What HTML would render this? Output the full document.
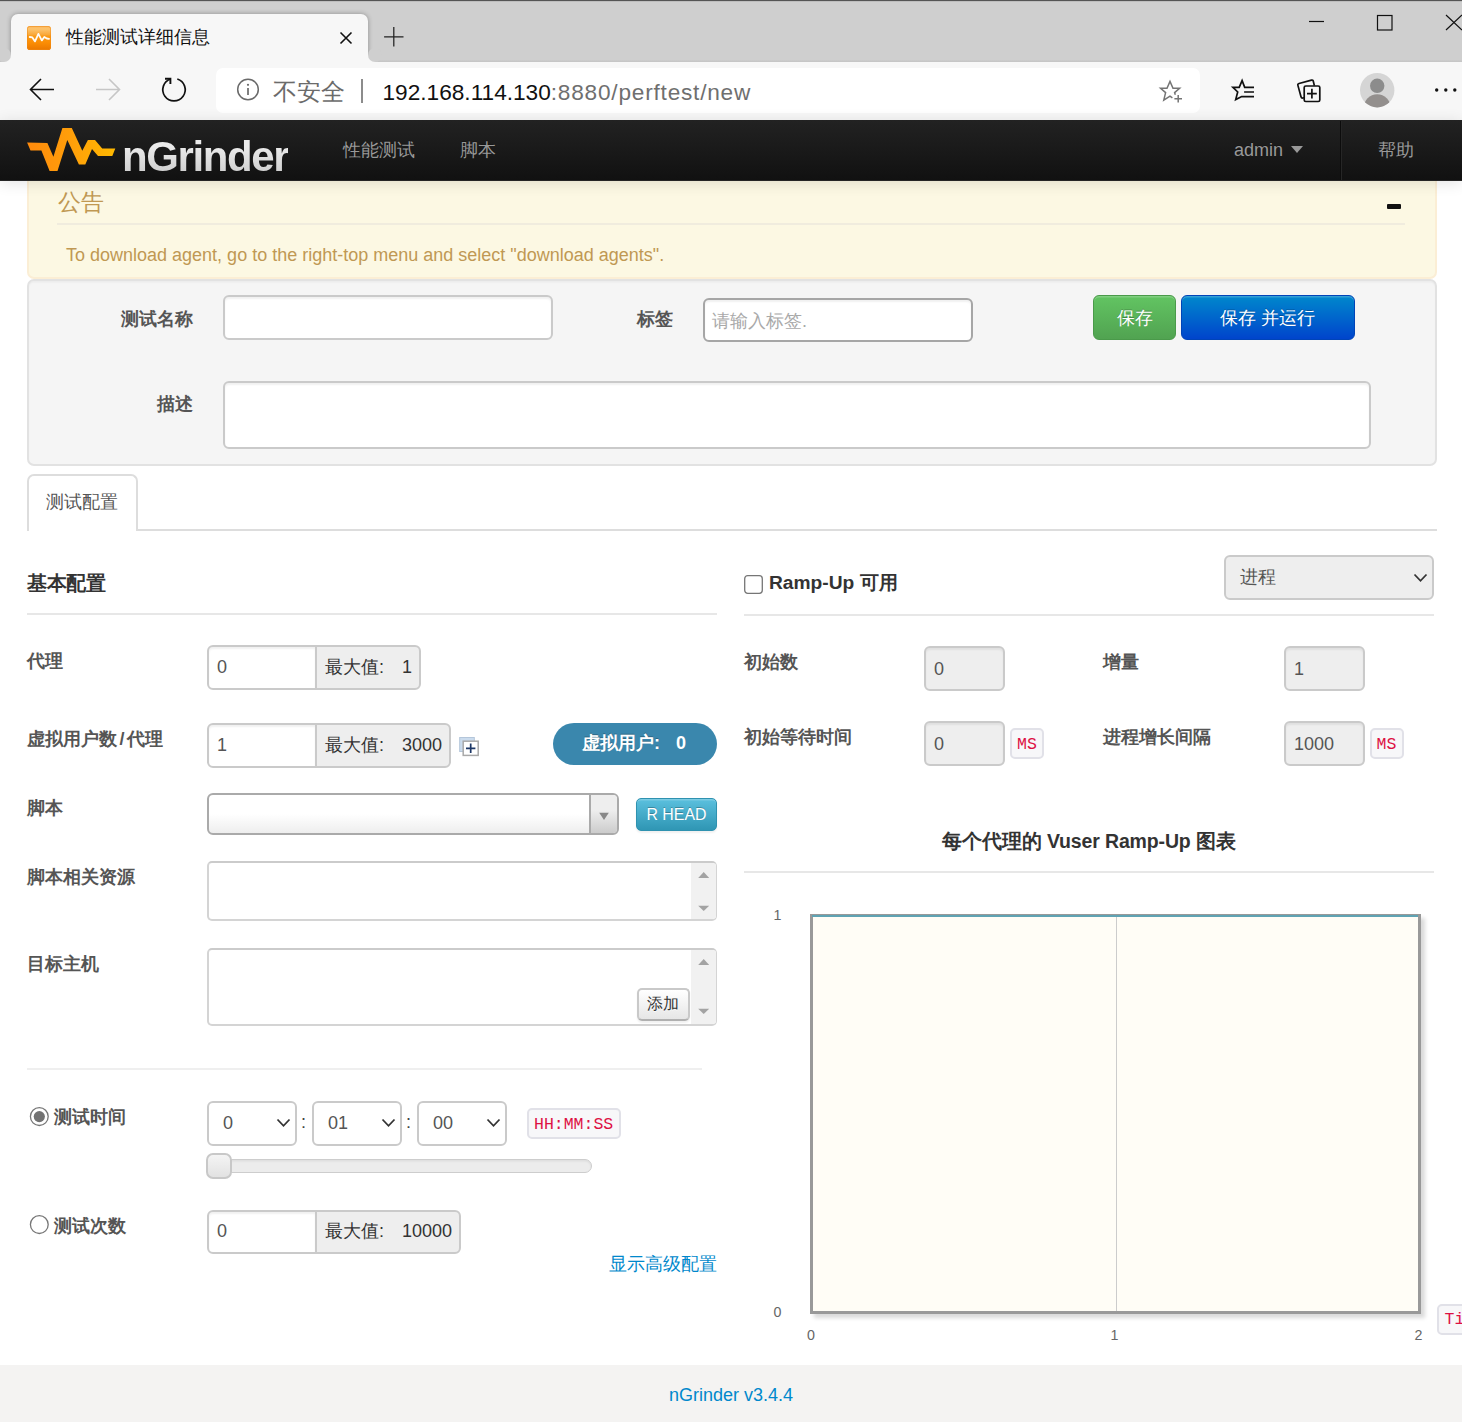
<!DOCTYPE html>
<html lang="zh">
<head>
<meta charset="utf-8">
<title>性能测试详细信息</title>
<style>
*{box-sizing:border-box;margin:0;padding:0}
html,body{width:1466px;height:1422px;overflow:hidden;background:#fff}
body{font-family:"Liberation Sans",sans-serif;font-size:18px;color:#333;position:relative}
.a{position:absolute;white-space:nowrap}
.t{position:absolute;white-space:nowrap;line-height:1}
#win{position:absolute;left:0;top:0;width:1462px;height:1422px;overflow:hidden;background:#fff}
/* browser chrome */
#topline{left:0;top:0;width:1462px;height:2px;background:linear-gradient(#505050 0,#5a5a5a 1px,#b4b4b4 1.2px,#cfcfcf 2px)}
#titlebar{left:0;top:1px;width:1462px;height:61px;background:linear-gradient(#cfcfcf 59px,#c6c6c6 60px)}
#tab{left:11px;top:14px;width:357px;height:48px;background:#f7f7f7;border-radius:7px 7px 0 0;box-shadow:0 0 5px rgba(0,0,0,.32)}
.tabfoot{width:7px;height:7px;top:54.5px;background:#f7f7f7}
.tabfoot i{position:absolute;width:14px;height:14px;border-radius:7px;background:#cfcfcf;top:-7px}
#toolbar{left:0;top:61.5px;width:1462px;height:58.5px;background:#f7f7f7}
#addr{left:216px;top:68px;width:984px;height:45px;background:#fff;border-radius:7px}
/* nav */
#nav{left:0;top:120px;width:1462px;height:61px;background:linear-gradient(#222,#111);border-bottom:1px solid #252525;box-shadow:0 1.5px 15px rgba(0,0,0,.12)}
.navt{color:#999;font-size:18px;top:141px;text-shadow:0 -1px 0 rgba(0,0,0,.25)}
/* page */
.lbl{font-weight:bold;font-size:18px;color:#555}
.hr{height:2px;background:#e7e7e7}
.inp{background:#fff;border:2px solid #cacaca;border-radius:6px;box-shadow:inset 0 2px 2px rgba(0,0,0,.06)}
.c{display:flex;align-items:center;justify-content:center;line-height:1}
.r{text-align:right}
.dis{background:#eee}
.addon{background:#eee;border:2px solid #cacaca;border-radius:0 6px 6px 0;font-size:18px;color:#333;text-shadow:0 1px 0 #fff}
.tick{font-size:14.25px;color:#666;width:20px;text-align:center}
.code{background:#f7f7f9;border:2px solid #e1e1e8;border-radius:5px;color:#d14;font-family:"Liberation Mono",monospace;font-size:16.5px}
</style>
</head>
<body>
<div id="win">

<!-- ===== browser chrome ===== -->
<div class="a" id="titlebar"></div>
<div class="a" id="topline"></div>
<div class="a" id="tab"></div>
<div class="a tabfoot" style="left:4px"><i style="left:-7px"></i></div>
<div class="a tabfoot" style="left:368px"><i style="left:0"></i></div>
<div class="a" id="toolbar"></div>
<div class="a" id="addr"></div>

<!-- favicon -->
<svg class="a" style="left:27px;top:26px" width="24" height="24" viewBox="0 0 24 24">
<defs><linearGradient id="fg" x1="0" y1="0" x2="0" y2="1"><stop offset="0" stop-color="#fbb55a"/><stop offset=".12" stop-color="#fdc46e"/><stop offset=".36" stop-color="#f9a83a"/><stop offset=".42" stop-color="#fb9a14"/><stop offset=".7" stop-color="#fb8d04"/><stop offset="1" stop-color="#ea7800"/></linearGradient></defs>
<rect x="0" y="0" width="24" height="24" rx="2.8" fill="url(#fg)"/>
<rect x=".4" y=".4" width="23.2" height="23.2" rx="2.5" fill="none" stroke="#ee8a18" stroke-width=".8" opacity=".7"/>
<path d="M2.7 11 L5.4 11.4 L8 15.4 L11.4 7.9 L14.8 14.4 L17.3 10.9 L19.8 12.5 L22 12.8" fill="none" stroke="#fff" stroke-width="1.8" stroke-linejoin="round" stroke-linecap="round" opacity=".96"/>
</svg>
<div class="t" style="left:66px;top:28px;font-size:18px;color:#111">性能测试详细信息</div>
<!-- tab close / new tab -->
<svg class="a" style="left:338px;top:30px" width="16" height="16" viewBox="0 0 16 16"><path d="M2.5 2.5 L13.5 13.5 M13.5 2.5 L2.5 13.5" stroke="#111" stroke-width="1.6" fill="none"/></svg>
<svg class="a" style="left:382px;top:25px" width="24" height="24" viewBox="0 0 24 24"><path d="M11.8 2.1 V21.5 M2.1 11.8 H21.5" stroke="#222" stroke-width="1.25" fill="none"/></svg>
<!-- window controls -->
<svg class="a" style="left:1300px;top:8px" width="162" height="30" viewBox="0 0 162 30">
<path d="M9 13.5 H24" stroke="#111" stroke-width="1.2" fill="none"/>
<rect x="77.5" y="7.5" width="14.5" height="14.5" stroke="#111" stroke-width="1.2" fill="none"/>
<path d="M146 7 L162 22 M162 7 L146 22" stroke="#111" stroke-width="1.2" fill="none"/>
</svg>

<!-- toolbar icons -->
<svg class="a" style="left:28px;top:76px" width="28" height="28" viewBox="0 0 28 28"><path d="M26 13.5 H3 M13 3 L2.5 13.5 L13 24" stroke="#111" stroke-width="1.6" fill="none"/></svg>
<svg class="a" style="left:94px;top:76px" width="28" height="28" viewBox="0 0 28 28"><path d="M2 13.5 H25 M15 3 L25.5 13.5 L15 24" stroke="#c6c6c6" stroke-width="1.6" fill="none"/></svg>
<svg class="a" style="left:160px;top:76.4px" width="28" height="28" viewBox="0 0 28 28"><path d="M17.3 3 A11.2 11.2 0 1 1 10.7 3" stroke="#111" stroke-width="1.7" fill="none"/><path d="M5 2.7 H10.4 V8.1" stroke="#111" stroke-width="1.9" fill="none"/></svg>
<!-- address bar content -->
<svg class="a" style="left:235px;top:77px" width="26" height="26" viewBox="0 0 26 26"><circle cx="13" cy="12.5" r="10.3" stroke="#6a6a6a" stroke-width="1.5" fill="none"/><path d="M13 11 V18" stroke="#6a6a6a" stroke-width="1.7"/><circle cx="13" cy="7.8" r="1.1" fill="#6a6a6a"/></svg>
<div class="t" style="left:273px;top:81px;font-size:23.5px;color:#6b6b6b">不安全</div>
<div class="a" style="left:361px;top:79px;width:1.5px;height:24px;background:#8c8c8c"></div>
<div class="t" id="url" style="left:382.5px;top:80.5px;font-size:22.65px;color:#111">192.168.114.130<span style="color:#6f6f6f;letter-spacing:.78px">:8880/perftest/new</span></div>
<!-- star+ -->
<svg class="a" style="left:1156px;top:76px" width="30" height="30" viewBox="0 0 30 30"><path d="M19.3 18.8 L18.6 16.6 L23.6 12.3 L17 12.3 L14 5.4 L11 12.3 L4.6 12.3 L9.6 16.6 L7.8 24.2 L14 20.2 L16.4 21.8" stroke="#747474" stroke-width="1.5" fill="none" stroke-linejoin="miter" stroke-miterlimit="10"/><path d="M22.2 19 V26.6 M18.4 22.8 H26" stroke="#747474" stroke-width="1.5"/></svg>
<!-- favorites -->
<svg class="a" style="left:1228px;top:75px" width="30" height="30" viewBox="0 0 30 30"><path d="M26 12.4 H16.7 L14.1 5.6 L11.2 12.4 H4.9 L9.7 17 L7.7 24.6 L13.7 21.6 H26 M16.1 17 H26" stroke="#111" stroke-width="1.7" fill="none" stroke-linejoin="miter" stroke-miterlimit="10"/></svg>
<!-- collections -->
<svg class="a" style="left:1296px;top:77px" width="28" height="28" viewBox="0 0 28 28"><path d="M18.4 8.8 L17.3 4.2 Q16.9 2.7 15.5 3.1 L3 6.5 Q1.5 6.9 1.9 8.4 L5 19.8 Q5.4 21.2 6.8 21 L8 20.7" stroke="#111" stroke-width="1.7" fill="none"/><rect x="8.2" y="9" width="15.6" height="15.5" rx="1.6" stroke="#111" stroke-width="1.7" fill="#f7f7f7"/><path d="M15.9 11.8 V21.6 M11 16.7 H20.8" stroke="#111" stroke-width="1.7"/></svg>
<!-- avatar -->
<svg class="a" style="left:1359.9px;top:72.8px" width="35" height="35" viewBox="0 0 35 35"><defs><clipPath id="av"><circle cx="17.2" cy="17.2" r="17.2"/></clipPath></defs><circle cx="17.2" cy="17.2" r="17.2" fill="#d5d5d5"/><g clip-path="url(#av)"><circle cx="17.2" cy="12.8" r="7.2" fill="#8c8c8c"/><ellipse cx="17.2" cy="34.7" rx="13.5" ry="13.4" fill="#938f8d"/></g></svg>
<!-- ellipsis -->
<svg class="a" style="left:1430px;top:84px" width="32" height="12" viewBox="0 0 32 12"><circle cx="6.7" cy="6" r="1.7" fill="#111"/><circle cx="15.8" cy="6" r="1.7" fill="#111"/><circle cx="24.8" cy="6" r="1.7" fill="#111"/></svg>

<!-- ===== page ===== -->
<div class="a" id="page" style="left:0;top:120px;width:1462px;height:1302px;background:#fff"></div>
<!--PAGE-START-->
<!-- alert -->
<div class="a" style="left:27px;top:170px;width:1410px;height:109px;background:#fcf8e3;border:2px solid #fbeed5;border-radius:0 0 7px 7px"></div>
<div class="t" style="left:58px;top:192px;font-size:22.5px;letter-spacing:-.5px;color:#c09853">公告</div>
<div class="a" style="left:57px;top:223px;width:1348px;height:2px;background:#f0ecde"></div>
<div class="a" style="left:1387px;top:204px;width:14px;height:5px;background:#111;border-radius:1px"></div>
<div class="t" style="left:66px;top:246px;font-size:18px;color:#c09853">To download agent, go to the right-top menu and select "download agents".</div>

<!-- well -->
<div class="a" style="left:27px;top:279px;width:1410px;height:186.5px;background:#f5f5f5;border:2px solid #e2e2e2;border-radius:7px;box-shadow:inset 0 1.5px 1.5px rgba(0,0,0,.04)"></div>
<div class="t lbl r" style="left:43px;width:150px;top:310px">测试名称</div>
<div class="a inp" style="left:223px;top:295px;width:330px;height:45px"></div>
<div class="t lbl r" style="left:573px;width:100px;top:310px">标签</div>
<div class="a" style="left:703px;top:298px;width:270px;height:44px;background:#fff;border:2px solid #a6a6a6;border-radius:6px;box-shadow:inset 0 2px 2px rgba(0,0,0,.06)"></div>
<div class="t" style="left:712px;top:312px;font-size:18px;color:#a9a9a9">请输入标签.</div>
<div class="a c" style="left:1093px;top:295px;width:83px;height:45px;border-radius:6px;border:1.5px solid #4a9a4a;background:linear-gradient(#62c462,#51a351);box-shadow:inset 0 1.5px 0 rgba(255,255,255,.2);font-size:18px;color:#fff;text-shadow:0 -1px 0 rgba(0,0,0,.25)">保存</div>
<div class="a c" style="left:1181px;top:295px;width:174px;height:45px;border-radius:6px;border:1.5px solid #0044b8;background:linear-gradient(#0088cc,#0044cc);box-shadow:inset 0 1.5px 0 rgba(255,255,255,.2);font-size:18px;color:#fff;text-shadow:0 -1px 0 rgba(0,0,0,.25)">保存 并运行</div>
<div class="t lbl r" style="left:43px;width:150px;top:395px">描述</div>
<div class="a inp" style="left:223px;top:381px;width:1148px;height:68px"></div>

<!-- tab -->
<div class="a" style="left:27px;top:528.5px;width:1410px;height:2px;background:#ddd"></div>
<div class="a" style="left:27px;top:474px;width:111px;height:57px;background:#fff;border:2px solid #ddd;border-bottom:none;border-radius:7px 7px 0 0"></div>
<div class="t" style="left:46px;top:493px;font-size:18px;color:#555">测试配置</div>

<!-- left column -->
<div class="t" style="left:27px;top:574px;font-size:19.5px;letter-spacing:-.5px;font-weight:bold;color:#333">基本配置</div>
<div class="a hr" style="left:27px;top:613px;width:690px;height:2px"></div>

<div class="t lbl" style="left:27px;top:652px">代理</div>
<div class="a inp" style="left:207px;top:645px;width:110px;height:44.5px;border-radius:6px 0 0 6px"></div>
<div class="t" style="left:217px;top:658px;font-size:18px;color:#555">0</div>
<div class="a addon" style="left:315px;top:645px;width:105.5px;height:44.5px"></div>
<div class="t" style="left:325px;top:658px;font-size:18px;color:#333">最大值:</div>
<div class="t" style="left:402px;top:658px;font-size:18px;color:#333">1</div>

<div class="t lbl" style="left:27px;top:730px">虚拟用户数<span style="margin:0 2.5px">/</span>代理</div>
<div class="a inp" style="left:207px;top:723px;width:110px;height:44.5px;border-radius:6px 0 0 6px"></div>
<div class="t" style="left:217px;top:736px;font-size:18px;color:#555">1</div>
<div class="a addon" style="left:315px;top:723px;width:135.5px;height:44.5px"></div>
<div class="t" style="left:325px;top:736px;font-size:18px;color:#333">最大值:</div>
<div class="t" style="left:402px;top:736px;font-size:18px;color:#333">3000</div>
<!-- expand icon -->
<svg class="a" style="left:458px;top:736px" width="22" height="22" viewBox="0 0 22 22"><rect x="1.7" y="1.5" width="14.6" height="14" fill="#cbdcee" stroke="#b4c6da" stroke-width="1"/><rect x="5.2" y="5.2" width="15" height="14.2" fill="#fff" stroke="#a9a9a9" stroke-width="1.5"/><path d="M12.7 7.6 V17 M8 12.3 H17.4" stroke="#1c3766" stroke-width="1.7"/></svg>
<!-- vuser badge -->
<div class="a" style="left:553px;top:722.5px;width:164px;height:42.5px;border-radius:22px;background:#3a87ad"></div>
<div class="t" style="left:582px;top:734px;font-size:18px;font-weight:bold;color:#fff;text-shadow:0 -1px 0 rgba(0,0,0,.25)">虚拟用户:</div>
<div class="t" style="left:676px;top:734px;font-size:18px;font-weight:bold;color:#fff">0</div>

<div class="t lbl" style="left:27px;top:799px">脚本</div>
<div class="a" style="left:207px;top:793px;width:412px;height:42px;border:2px solid #aaa;border-radius:6px;background:linear-gradient(#fff 50%,#eee);overflow:hidden"><div style="position:absolute;right:0;top:0;width:28px;height:100%;border-left:2px solid #aaa;background:linear-gradient(#eee 40%,#ccc)"></div></div>
<svg class="a" style="left:598px;top:811.5px" width="12" height="9" viewBox="0 0 12 9"><path d="M1.2 0.8 H10.8 L6 8 Z" fill="#888"/></svg>
<div class="a c" style="left:636px;top:798px;width:81px;height:33px;border-radius:5px;border:1.5px solid #2f92b0;background:linear-gradient(#5bc0de,#2f96b4);box-shadow:inset 0 1.5px 0 rgba(255,255,255,.2),0 1.5px 2px rgba(0,0,0,.06);font-size:15.9px;color:#fff;text-shadow:0 -1px 0 rgba(0,0,0,.25)">R HEAD</div>

<div class="t lbl" style="left:27px;top:868px">脚本相关资源</div>
<div class="a" style="left:207px;top:861px;width:510px;height:60px;border:2px solid #d4d4d4;border-top-color:#cbcbcb;border-right-width:1px;border-radius:5px;background:#fff;overflow:hidden"><div style="position:absolute;right:0;top:0;width:25px;height:100%;background:#f1f1f1"></div></div>
<svg class="a" style="left:697px;top:871px" width="14" height="8" viewBox="0 0 14 8"><path d="M6.7 1 L12.2 7 H1.2 Z" fill="#a3a3a3"/></svg>
<svg class="a" style="left:697px;top:905px" width="14" height="8" viewBox="0 0 14 8"><path d="M1.2 0.8 H12.2 L6.7 6 Z" fill="#a3a3a3"/></svg>

<div class="t lbl" style="left:27px;top:955px">目标主机</div>
<div class="a" style="left:207px;top:948px;width:510px;height:78px;border:2px solid #d4d4d4;border-top-color:#cbcbcb;border-right-width:1px;border-radius:5px;background:#fff;overflow:hidden"><div style="position:absolute;right:0;top:0;width:25px;height:100%;background:#f1f1f1"></div></div>
<svg class="a" style="left:697px;top:958px" width="14" height="8" viewBox="0 0 14 8"><path d="M6.7 1 L12.2 7 H1.2 Z" fill="#a3a3a3"/></svg>
<svg class="a" style="left:697px;top:1008px" width="14" height="8" viewBox="0 0 14 8"><path d="M1.2 0.8 H12.2 L6.7 6 Z" fill="#a3a3a3"/></svg>
<div class="a c" style="left:637px;top:988px;width:52.5px;height:32.5px;border-radius:5px;border:2px solid #c9c9c9;border-bottom-color:#b0b0b0;background:linear-gradient(#fff,#e6e6e6);box-shadow:0 1.5px 2px rgba(0,0,0,.06);font-size:15.75px;color:#333;text-shadow:0 1px 0 rgba(255,255,255,.75)">添加</div>

<div class="a hr" style="left:27px;top:1067.5px;width:675px;height:2px;background:#efefef"></div>

<!-- radio 1 -->
<svg class="a" style="left:29px;top:1106px" width="21" height="21" viewBox="0 0 21 21"><circle cx="10.3" cy="10.6" r="8.9" fill="#fff" stroke="#767676" stroke-width="1.3"/><circle cx="10.3" cy="10.6" r="5.6" fill="#727272"/></svg>
<div class="t lbl" style="left:54px;top:1108px">测试时间</div>
<!-- time selects -->
<div class="a inp" style="left:207px;top:1101px;width:90px;height:45px;box-shadow:none"></div>
<div class="t" style="left:223px;top:1114px;font-size:18px;color:#555">0</div>
<svg class="a" style="left:276px;top:1118px" width="15" height="10" viewBox="0 0 15 10"><path d="M1.5 1.5 L7.5 7.8 L13.5 1.5" fill="none" stroke="#333" stroke-width="1.8"/></svg>
<div class="t" style="left:301px;top:1113px;font-size:18px;color:#444">:</div>
<div class="a inp" style="left:312px;top:1101px;width:90px;height:45px;box-shadow:none"></div>
<div class="t" style="left:328px;top:1114px;font-size:18px;color:#555">01</div>
<svg class="a" style="left:381px;top:1118px" width="15" height="10" viewBox="0 0 15 10"><path d="M1.5 1.5 L7.5 7.8 L13.5 1.5" fill="none" stroke="#333" stroke-width="1.8"/></svg>
<div class="t" style="left:406px;top:1113px;font-size:18px;color:#444">:</div>
<div class="a inp" style="left:417px;top:1101px;width:90px;height:45px;box-shadow:none"></div>
<div class="t" style="left:433px;top:1114px;font-size:18px;color:#555">00</div>
<svg class="a" style="left:486px;top:1118px" width="15" height="10" viewBox="0 0 15 10"><path d="M1.5 1.5 L7.5 7.8 L13.5 1.5" fill="none" stroke="#333" stroke-width="1.8"/></svg>
<div class="a code" style="left:527px;top:1108px;width:94px;height:31px"></div>
<div class="t" style="left:534px;top:1117px;font-size:16.5px;color:#d14;font-family:'Liberation Mono',monospace">HH:MM:SS</div>
<!-- slider -->
<div class="a" style="left:207px;top:1158.5px;width:385px;height:14.5px;border-radius:8px;background:#ececec;border:1.5px solid #cdcdcd;box-shadow:inset 0 1.5px 2px rgba(0,0,0,.06)"></div>
<div class="a" style="left:205.5px;top:1152.5px;width:26px;height:26px;border-radius:7px;background:linear-gradient(#f4f4f4,#e2e2e2);border:2px solid #c8c8c8"></div>

<!-- radio 2 -->
<svg class="a" style="left:29px;top:1214px" width="21" height="21" viewBox="0 0 21 21"><circle cx="10.3" cy="10.6" r="8.9" fill="#fff" stroke="#767676" stroke-width="1.3"/></svg>
<div class="t lbl" style="left:54px;top:1216.5px">测试次数</div>
<div class="a inp" style="left:207px;top:1209.5px;width:110px;height:44.5px;border-radius:6px 0 0 6px"></div>
<div class="t" style="left:217px;top:1222px;font-size:18px;color:#555">0</div>
<div class="a addon" style="left:315px;top:1209.5px;width:145.5px;height:44.5px"></div>
<div class="t" style="left:325px;top:1222px;font-size:18px;color:#333">最大值:</div>
<div class="t" style="left:402px;top:1222px;font-size:18px;color:#333">10000</div>
<div class="t r" style="left:467px;width:250px;top:1254.7px;font-size:18px;color:#0088cc">显示高级配置</div>

<!-- right column -->
<svg class="a" style="left:743px;top:574px" width="22" height="22" viewBox="0 0 22 22"><rect x="1.7" y="1.7" width="17.6" height="17.6" rx="3" fill="#fff" stroke="#767676" stroke-width="1.3"/></svg>
<div class="t" style="left:769px;top:573px;font-size:19.2px;font-weight:bold;color:#333">Ramp-Up 可用</div>
<div class="a inp dis" style="left:1224px;top:555px;width:210px;height:44.5px;box-shadow:none"></div>
<div class="t" style="left:1240px;top:568px;font-size:18px;color:#555">进程</div>
<svg class="a" style="left:1413px;top:573px" width="15" height="10" viewBox="0 0 15 10"><path d="M1.5 1.5 L7.5 7.8 L13.5 1.5" fill="none" stroke="#333" stroke-width="1.8"/></svg>
<div class="a hr" style="left:744px;top:614px;width:690px;height:2px"></div>

<div class="t lbl" style="left:744px;top:653px">初始数</div>
<div class="a inp dis" style="left:924px;top:646px;width:81px;height:44.5px"></div>
<div class="t" style="left:934px;top:660px;font-size:18px;color:#555">0</div>
<div class="t lbl" style="left:1103px;top:653px">增量</div>
<div class="a inp dis" style="left:1284px;top:646px;width:81px;height:44.5px"></div>
<div class="t" style="left:1294px;top:660px;font-size:18px;color:#555">1</div>

<div class="t lbl" style="left:744px;top:728px">初始等待时间</div>
<div class="a inp dis" style="left:924px;top:721px;width:81px;height:45px"></div>
<div class="t" style="left:934px;top:735px;font-size:18px;color:#555">0</div>
<div class="a code" style="left:1010px;top:728px;width:33.5px;height:31px"></div>
<div class="t" style="left:1017px;top:736.5px;font-size:16.5px;color:#d14;font-family:'Liberation Mono',monospace">MS</div>
<div class="t lbl" style="left:1103px;top:728px">进程增长间隔</div>
<div class="a inp dis" style="left:1284px;top:721px;width:81px;height:45px"></div>
<div class="t" style="left:1294px;top:735px;font-size:18px;color:#555">1000</div>
<div class="a code" style="left:1370px;top:728px;width:33.5px;height:31px"></div>
<div class="t" style="left:1376.5px;top:736.5px;font-size:16.5px;color:#d14;font-family:'Liberation Mono',monospace">MS</div>

<div class="t" style="left:741px;width:696px;text-align:center;top:832px;font-size:19.5px;letter-spacing:-.15px;font-weight:bold;color:#333">每个代理的 Vuser Ramp-Up 图表</div>
<div class="a hr" style="left:744px;top:870.5px;width:690px;height:2px"></div>

<!-- chart -->
<div class="a" style="left:810px;top:913.5px;width:610.5px;height:400px;background:#fffdf6;border:3px solid #999;box-shadow:3.5px 3.5px 4px rgba(0,0,0,.15)"></div>
<div class="a" style="left:812px;top:915px;width:606px;height:2px;background:#5fa3b3"></div>
<div class="a" style="left:1116px;top:917px;width:1.4px;height:394px;background:#ccc"></div>
<div class="t tick" style="left:767.5px;top:908px">1</div>
<div class="t tick" style="left:767.5px;top:1305px">0</div>
<div class="t tick" style="left:801px;top:1328px">0</div>
<div class="t tick" style="left:1104.5px;top:1328px">1</div>
<div class="t tick" style="left:1408.5px;top:1328px">2</div>
<div class="a code" style="left:1437px;top:1304px;width:40px;height:30.5px"></div>
<div class="t" style="left:1444.5px;top:1312px;font-size:16.5px;color:#d14;font-family:'Liberation Mono',monospace">Ti</div>

<!-- footer -->
<div class="a" style="left:0;top:1365px;width:1462px;height:57px;background:#f4f3f2"></div>
<div class="t" style="left:669px;top:1386px;font-size:18px;color:#0088cc">nGrinder v3.4.4</div>
<!--PAGE-END-->

<!-- ===== navbar ===== -->
<div class="a" id="nav"></div>
<svg class="a" style="left:20px;top:122px" width="104" height="56" viewBox="20 122 104 56">
<defs><linearGradient id="lg" x1="0" y1="0" x2="1" y2="0"><stop offset="0" stop-color="#ff8a0c"/><stop offset=".5" stop-color="#ff9f0a"/><stop offset="1" stop-color="#ffb900"/></linearGradient></defs>
<path d="M27.1 142.5 L47.4 142.9 L53.4 156.8 L62.4 127.9 L71.8 127.9 L82.3 150.8 L87.9 139.9 L95 139.9 L102.2 148.5 L115.3 148.5 L112.3 156 L98 156 L92 148.9 L85.3 164.6 L78.9 164.6 L67.3 139.9 L57.5 171 L49.6 171 L41.4 150.4 L30.5 150.4 Z" fill="url(#lg)"/>
</svg>
<div class="t" id="logo" style="left:122px;top:135.5px;font-size:42px;font-weight:bold;letter-spacing:-1.4px;background:linear-gradient(#ebebeb 25%,#d0d0d0 85%);-webkit-background-clip:text;background-clip:text;color:transparent">nGrinder</div>
<div class="t navt" style="left:343px">性能测试</div>
<div class="t navt" style="left:460px">脚本</div>
<div class="t navt" style="left:1234px">admin</div>
<svg class="a" style="left:1291px;top:146px" width="12" height="7" viewBox="0 0 12 7"><path d="M0 0 H12 L6 7 Z" fill="#999"/></svg>
<div class="a" style="left:1340px;top:121px;width:1px;height:59px;background:#0c0c0c"></div>
<div class="a" style="left:1341px;top:121px;width:1px;height:59px;background:#262626"></div>
<div class="t navt" style="left:1378px">帮助</div>

</div>
</body>
</html>
